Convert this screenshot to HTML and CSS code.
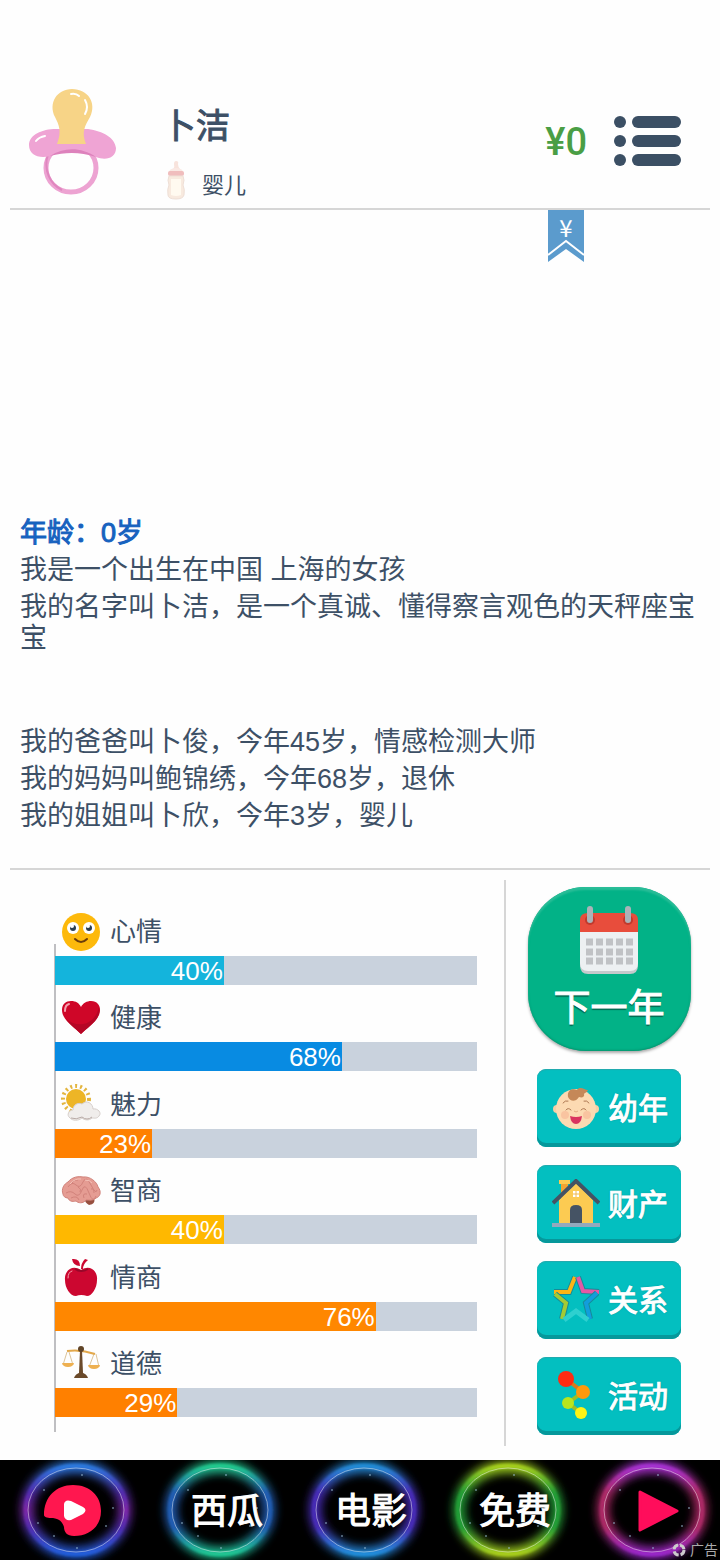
FILE: index.html
```html
<!DOCTYPE html>
<html lang="zh-CN">
<head>
  <meta charset="UTF-8">
  <meta name="viewport" content="width=device-width, initial-scale=1.0">
  <title>卜洁 - 婴儿</title>
  <link rel="stylesheet" href="styles.css">
</head>
<body>
  <header class="header">
    <svg class="avatar" viewBox="0 0 88 108">
      <ellipse cx="43" cy="80" rx="25" ry="24" fill="none" stroke="#eda3d2" stroke-width="5"/>
      <path d="M20 66C15 82 22 96 34 102" fill="none" stroke="#e087bf" stroke-width="2"/>
      <path d="M1 57C1 47 14 41 28 41L60 41C75 43 87 50 88 60C88 70 78 73 68 69C50 61 36 61 22 68C11 71 1 67 1 57Z" fill="#efa4d4"/>
      <path d="M22 68C36 59 53 59 68 69C52 64 38 64 22 68Z" fill="#dd82bc"/>
      <path d="M8 53Q11 49 17 48" fill="none" stroke="#fff" stroke-width="2" stroke-linecap="round"/>
      <path d="M29 56C34 43 31 37 27 29C20 15 29 1 44 1C60 1 69 15 62 29C57 38 53 44 58 56Z" fill="#f7d487"/>
      <path d="M43 6Q48 5 51 8M57 12Q61 19 57 26" fill="none" stroke="#fff" stroke-width="2" stroke-linecap="round"/>
    </svg>
    <div class="person">
      <h1>卜洁</h1>
      <div class="stage">
        <svg width="24" height="40" viewBox="0 0 24 40">
          <path d="M9 9Q11 7 10 4Q10 1 12 1Q15 1 14 4Q14 7 16 9Z" fill="#f8e3dc"/>
          <path d="M4 14Q5 8 12 8Q19 8 20 14Z" fill="#fae9e4"/>
          <rect x="4" y="11" width="16" height="5" rx="2" fill="#f0bdbd"/>
          <path d="M5 16H19Q21 20 19 25Q21 29 20 35Q19 39 12 39Q4 39 4 35Q3 29 5 25Q3 20 5 16Z" fill="#f8eadf" stroke="#eedfd6"/>
          <path d="M7 19H17V35Q12 37 7 35Z" fill="#fffaf0"/>
        </svg>
        <span>婴儿</span>
      </div>
    </div>
    <div class="money">¥0</div>
    <button class="menu" aria-label="菜单">
      <svg width="68" height="52" viewBox="0 0 68 52" fill="#3b4f64">
        <circle cx="6" cy="7" r="6"/><rect x="18" y="1" width="49" height="12" rx="6"/>
        <circle cx="6" cy="26" r="6"/><rect x="18" y="20" width="49" height="12" rx="6"/>
        <circle cx="6" cy="45" r="6"/><rect x="18" y="39" width="49" height="12" rx="6"/>
      </svg>
    </button>
  </header>

  <main class="log">
    <button class="ribbon" aria-label="财富">
      <svg width="36" height="52" viewBox="0 0 36 52">
        <path d="M0 0H36V52L18 39L0 52Z" fill="#5b9bcd"/>
        <path d="M0 45L18 31L36 45" fill="none" stroke="#fff" stroke-width="2"/>
        <text x="18" y="27" text-anchor="middle" class="ribbon-text">¥</text>
      </svg>
    </button>
    <div class="story">
      <h2>年龄：0岁</h2>
      <p>我是一个出生在中国 上海的女孩</p>
      <p>我的名字叫卜洁，是一个真诚、懂得察言观色的天秤座宝宝</p>
      <div class="family">
        <p>我的爸爸叫卜俊，今年45岁，情感检测大师</p>
        <p>我的妈妈叫鲍锦绣，今年68岁，退休</p>
        <p>我的姐姐叫卜欣，今年3岁，婴儿</p>
      </div>
    </div>
  </main>

  <section class="panel">
    <ul class="stats">
      <li>
        <div class="stat-name">
          <svg viewBox="0 0 40 40">
            <circle cx="20" cy="21" r="19" fill="#fdb90b"/>
            <circle cx="12" cy="17" r="6" fill="#fff"/><circle cx="28" cy="17" r="6" fill="#fff"/>
            <circle cx="12" cy="17" r="3" fill="#2c3e50"/><circle cx="28" cy="17" r="3" fill="#2c3e50"/>
            <circle cx="11" cy="15" r="2" fill="#fff"/><circle cx="27" cy="15" r="2" fill="#fff"/>
            <path d="M14 28Q20 34 26 28" fill="none" stroke="#6b3d0c" stroke-width="2" stroke-linecap="round"/>
          </svg>
          <span>心情</span>
        </div>
        <div class="bar"><div class="fill cyan" style="width:40%">40%</div></div>
      </li>
      <li>
        <div class="stat-name">
          <svg viewBox="0 0 40 40">
            <path d="M20 37C13 30 1 23 1 13C1 7 5 4 10 4C15 4 18 6 20 10C22 6 26 4 30 4C36 4 39 8 39 13C39 23 27 30 20 37Z" fill="#cf0628"/>
            <path d="M38 10C41 22 27 30 20 37C14 31 9 28 5 22C17 32 34 28 38 10Z" fill="#b50625"/>
            <path d="M4 14Q4 8 8 7" fill="none" stroke="#f5a0ae" stroke-width="2" stroke-linecap="round"/>
          </svg>
          <span>健康</span>
        </div>
        <div class="bar"><div class="fill blue" style="width:68%">68%</div></div>
      </li>
      <li>
        <div class="stat-name">
          <svg viewBox="0 0 40 40">
            <circle cx="15" cy="15" r="13" fill="none" stroke="#e3b53e" stroke-width="4" stroke-dasharray="2 3"/>
            <circle cx="15" cy="15" r="10" fill="#edb526"/>
            <path d="M9 34C5 31 8 26 12 26C12 21 17 18 21 20C26 15 32 20 32 25C37 24 41 29 38 32C36 35 33 34 31 34C28 37 23 36 21 34C17 37 12 37 9 34Z" fill="#f0edeb" stroke="#d6cfcb"/>
            <path d="M10 34Q15 36 21 33Q26 37 31 33" fill="none" stroke="#b8aaa6" stroke-width="1"/>
          </svg>
          <span>魅力</span>
        </div>
        <div class="bar"><div class="fill orange" style="width:23%">23%</div></div>
      </li>
      <li>
        <div class="stat-name">
          <svg viewBox="0 0 40 40">
            <path d="M23 28H33Q35 34 28 35Q24 33 23 28Z" fill="#97503f"/>
            <path d="M2 24C0 19 3 14 7 12C11 7 17 6 22 7C29 6 36 12 37 17C41 22 39 27 35 28C32 31 28 30 25 30C22 34 17 33 15 31C11 32 8 31 7 28C4 28 2 26 2 24Z" fill="#e59c93" stroke="#d0827a"/>
            <path d="M7 17Q11 11 15 15T22 12T30 15T36 20M5 23Q10 20 14 24T21 20T28 23T35 26M11 13Q13 9 17 10M10 28Q16 25 18 30M23 28Q21 23 26 24M17 17Q21 19 19 22M30 19Q33 18 33 23" fill="none" stroke="#d2827b" stroke-width="1"/>
            <path d="M9 14Q14 8 20 9M24 10Q29 10 31 13" fill="none" stroke="#f4c2b9" stroke-width="1"/>
          </svg>
          <span>智商</span>
        </div>
        <div class="bar"><div class="fill yellow" style="width:40%">40%</div></div>
      </li>
      <li>
        <div class="stat-name">
          <svg viewBox="0 0 40 40">
            <path d="M20 13C29 7 37 14 36 23C36 31 31 39 26 39Q20 37 15 39C9 39 4 31 4 23C3 14 11 7 20 13Z" fill="#cc0730"/>
            <path d="M20 12Q20 6 24 2L27 3Q22 7 22 12ZM19 9Q12 9 11 2Q19 1 19 9Z" fill="#cc0730"/>
            <path d="M14 12Q20 16 27 12" fill="none" stroke="#98082a" stroke-width="2"/>
            <path d="M7 21Q7 15 11 14" fill="none" stroke="#f5a0ae" stroke-width="1" stroke-linecap="round"/>
          </svg>
          <span>情商</span>
        </div>
        <div class="bar"><div class="fill amber" style="width:76%">76%</div></div>
      </li>
      <li>
        <div class="stat-name">
          <svg viewBox="0 0 40 40">
            <path d="M6 9L2 22M8 9L12 22M33 11L28 24M35 11L38 24" stroke="#dcc49a" fill="none"/>
            <path d="M6 8Q20 6 34 11" stroke="#e3a84a" stroke-width="2" fill="none"/>
            <path d="M1 20H13Q12 24 7 24Q2 24 1 20ZM27 22H39Q38 26 33 26Q28 26 27 22Z" fill="#eeb050"/>
            <path d="M19 7H21L22 30H18Z" fill="#6b4a2a"/><circle cx="20" cy="6" r="3" fill="#604427"/>
            <path d="M13 35Q14 31 20 29Q26 31 27 35Z" fill="#6b4a2a"/>
          </svg>
          <span>道德</span>
        </div>
        <div class="bar"><div class="fill orange" style="width:29%">29%</div></div>
      </li>
    </ul>

    <nav class="actions">
      <button class="next-year">
        <svg width="60" height="70" viewBox="0 0 60 70">
          <path d="M1 24V60Q1 69 9 69H51Q59 69 59 60V24Z" fill="#c5c9cc"/>
          <path d="M1 24V58Q1 66 9 66H51Q59 66 59 58V24Z" fill="#edf0f2"/>
          <path d="M1 27V15Q1 8 9 8H51Q59 8 59 15V27Z" fill="#e84d3c"/>
          <circle cx="11" cy="15" r="5" fill="#c13a2d"/><circle cx="49" cy="15" r="5" fill="#c13a2d"/>
          <rect x="8" y="1" width="6" height="17" rx="3" fill="#abb3b8"/><rect x="46" y="1" width="6" height="17" rx="3" fill="#abb3b8"/>
          <g stroke="#c0c2c5" stroke-width="7" stroke-dasharray="7 3"><path d="M7 37H54"/><path d="M7 47H54"/><path d="M7 56H54"/></g>
        </svg>
        <span>下一年</span>
      </button>
      <button class="action">
        <svg viewBox="0 0 48 48">
          <circle cx="5" cy="26" r="4" fill="#f8cfa5"/><circle cx="43" cy="26" r="4" fill="#f8cfa5"/>
          <ellipse cx="24" cy="26" rx="20" ry="20" fill="#fcdab2"/>
          <path d="M16 14C15 7 20 5 25 7C28 2 34 8 36 7C35 10 32 10 32 11C33 14 30 15 27 14C23 20 18 18 16 14Z" fill="#c58858"/>
          <path d="M11 20Q13 17 16 18M32 18Q35 17 37 20M14 27Q16 24 19 27M29 27Q32 24 34 27" fill="none" stroke="#ad7852" stroke-width="1" stroke-linecap="round"/>
          <circle cx="13" cy="32" r="4" fill="#f9c4a0"/><circle cx="35" cy="32" r="4" fill="#f9c4a0"/>
          <path d="M18 33Q24 35 30 33Q29 41 24 41Q19 41 18 33Z" fill="#d9335f"/>
          <path d="M22 28Q24 30 26 28" fill="none" stroke="#e6ab82" stroke-width="1"/>
        </svg>
        <span>幼年</span>
      </button>
      <button class="action">
        <svg viewBox="0 0 48 48">
          <path d="M9 3H16V14L9 20Z" fill="#f3a333"/><rect x="7" y="1" width="11" height="4" fill="#fcca52"/>
          <path d="M7 21L24 4L41 21V44H7Z" fill="#fccb52"/>
          <path d="M1 24L24 2L47 24" fill="none" stroke="#455364" stroke-width="4"/>
          <rect x="0" y="44" width="48" height="4" fill="#94a9bd"/>
          <path d="M18 44V31Q18 26 24 26Q30 26 30 31V44Z" fill="#455364"/>
          <path d="M21 12H27V18H21Z" fill="#fff"/><path d="M24 12V18M21 15H27" stroke="#eeb952"/>
        </svg>
        <span>财产</span>
      </button>
      <button class="action">
        <svg viewBox="0 0 48 48" fill="none" stroke-width="4">
          <path d="M2 17L17 17L23 2" stroke="#178b98" stroke-width="6"/><path d="M2 17L17 17L23 2" stroke="#fdb515"/>
          <path d="M26 2L31 16L47 17" stroke="#178b98" stroke-width="6"/><path d="M26 2L31 16L47 17" stroke="#e359a5"/>
          <path d="M45 18L34 28L38 44" stroke="#178b98" stroke-width="6"/><path d="M45 18L34 28L38 44" stroke="#129edc"/>
          <path d="M3 19L14 28L10 44" stroke="#178b98" stroke-width="6"/><path d="M3 19L14 28L10 44" stroke="#a3cb35"/>
          <path d="M12 45L24 36L36 45" stroke="#2ed0cf" stroke-width="5"/>
        </svg>
        <span>关系</span>
      </button>
      <button class="action">
        <svg viewBox="0 0 48 48">
          <path d="M14 8L31 21" stroke="#d8791d" stroke-width="4"/>
          <path d="M31 21L16 32L29 42" fill="none" stroke="#9dbd26" stroke-width="4"/>
          <circle cx="14" cy="8" r="8" fill="#ff2b12"/><circle cx="31" cy="21" r="7" fill="#ff990b"/>
          <circle cx="16" cy="32" r="6" fill="#b9e51c"/><circle cx="29" cy="42" r="6" fill="#fff314"/>
        </svg>
        <span>活动</span>
      </button>
    </nav>
  </section>

  <footer class="ad">
    <svg width="0" height="0" class="defs">
      <defs>
        <filter id="glow" x="-20%" y="-20%" width="140%" height="140%"><feGaussianBlur stdDeviation="4"/></filter>
        <filter id="soft" x="-20%" y="-20%" width="140%" height="140%"><feGaussianBlur stdDeviation="1"/></filter>
        <linearGradient id="g1" x2="0" y2="1"><stop stop-color="#2f86f5"/><stop offset=".3" stop-color="#5a2fc0"/><stop offset=".5" stop-color="#8a2bb8"/><stop offset=".7" stop-color="#5a2fc0"/><stop offset="1" stop-color="#2468f0"/></linearGradient>
        <linearGradient id="g2" x2="0" y2="1"><stop stop-color="#25e09b"/><stop offset=".3" stop-color="#2466c4"/><stop offset=".7" stop-color="#2466c4"/><stop offset="1" stop-color="#21dca0"/></linearGradient>
        <linearGradient id="g3" x2="0" y2="1"><stop stop-color="#249cec"/><stop offset=".3" stop-color="#4e2fc8"/><stop offset=".7" stop-color="#4e2fc8"/><stop offset="1" stop-color="#239df0"/></linearGradient>
        <linearGradient id="g4" x2="0" y2="1"><stop stop-color="#b8e51f"/><stop offset=".3" stop-color="#26ad3b"/><stop offset=".7" stop-color="#26ad3b"/><stop offset="1" stop-color="#bce41e"/></linearGradient>
        <linearGradient id="g5" x2="0" y2="1"><stop stop-color="#b536e8"/><stop offset=".3" stop-color="#bd2d70"/><stop offset=".7" stop-color="#bd2d70"/><stop offset="1" stop-color="#a82bdf"/></linearGradient>
        <g id="ring">
          <ellipse cx="76" cy="50" rx="49" ry="43" stroke-width="13" stroke-opacity=".8" filter="url(#glow)"/>
          <ellipse cx="76" cy="50" rx="50" ry="44" stroke-width="5" stroke-opacity=".7" filter="url(#soft)"/>
          <ellipse cx="76" cy="50" rx="48" ry="42" stroke="#fff" stroke-opacity=".45" stroke-width="1"/>
        </g>
        <g id="stars" fill="#9fc4dc" fill-opacity=".6">
          <circle cx="44" cy="30" r="1"/><circle cx="82" cy="15" r="1"/><circle cx="38" cy="63" r="1"/><circle cx="54" cy="76" r="1"/>
          <circle cx="106" cy="66" r="1"/><circle cx="113" cy="48" r="1"/><circle cx="77" cy="88" r="1"/>
        </g>
      </defs>
    </svg>
    <a href="#" class="orb" aria-label="播放">
      <svg viewBox="0 0 144 100" fill="none">
        <use href="#ring" stroke="url(#g1)"/><use href="#stars"/>
        <path d="M44 55C44 37 56 25 73 25C90 25 101 36 101 51C101 66 90 76 74 76C67 76 64 72 64 67C62 60 57 58 51 58C47 58 44 57 44 55Z" fill="#ff174f"/>
        <path d="M64 44Q65 39 71 41L83 47Q88 50 83 54L71 60Q65 61 64 56Z" fill="#fff"/>
      </svg>
    </a>
    <a href="#" class="orb">
      <svg viewBox="0 0 144 100" fill="none"><use href="#ring" stroke="url(#g2)"/><use href="#stars"/></svg>
      <span>西瓜</span>
    </a>
    <a href="#" class="orb">
      <svg viewBox="0 0 144 100" fill="none"><use href="#ring" stroke="url(#g3)"/><use href="#stars"/></svg>
      <span>电影</span>
    </a>
    <a href="#" class="orb">
      <svg viewBox="0 0 144 100" fill="none"><use href="#ring" stroke="url(#g4)"/><use href="#stars"/></svg>
      <span>免费</span>
    </a>
    <a href="#" class="orb" aria-label="打开">
      <svg viewBox="0 0 144 100" fill="none">
        <use href="#ring" stroke="url(#g5)"/><use href="#stars"/>
        <path d="M64 32L101 51L64 70Z" fill="#ff0d5b" stroke="#ff0d5b" stroke-width="3" stroke-linejoin="round"/>
      </svg>
    </a>
    <div class="ad-tag">
      <svg width="14" height="14" viewBox="0 0 14 14"><circle cx="7" cy="7" r="5" fill="none" stroke="#ccc" stroke-width="3" stroke-dasharray="6 2"/></svg>
      广告
    </div>
  </footer>
</body>
</html>
```
FILE: styles.css
```css
* {
  box-sizing: border-box;
}
body {
  margin: 0;
  min-height: 100vh;
  display: flex;
  flex-direction: column;
  background: #fefefe;
  color: #3d5066;
  font-family: "Liberation Sans", "Noto Sans CJK SC", sans-serif;
}
h1, h2, p, ul {
  margin: 0;
  padding: 0;
}
button {
  font-family: inherit;
  border: none;
  background: none;
  padding: 0;
  cursor: pointer;
}
svg {
  display: block;
}

/* header */
.header {
  display: flex;
  align-items: flex-start;
  margin: 0 10px;
  padding: 88px 28px 0 18px;
  height: 210px;
  border-bottom: 2px solid #d6d6d6;
}
.avatar {
  width: 88px;
  height: 108px;
}
.person {
  flex: 1;
  padding-left: 46px;
}
h1 {
  padding-top: 4px;
  font-size: 34px;
  line-height: 68px;
  font-weight: 400;
  -webkit-text-stroke: 1px;
}
.stage {
  display: flex;
  align-items: flex-end;
  gap: 14px;
  margin-left: 2px;
  font-size: 22px;
  line-height: 28px;
}
.money {
  font-family: Roboto, sans-serif;
  font-size: 38px;
  font-weight: 500;
  line-height: 108px;
  color: #4a9e45;
}
.menu {
  margin: 27px 0 0 27px;
}

/* life log */
.log {
  flex: 1;
  display: flex;
  flex-direction: column;
}
.ribbon {
  align-self: flex-end;
  margin-right: 136px;
}
.ribbon svg {
  overflow: visible;
}
.ribbon-text {
  font-family: "Noto Sans CJK SC", sans-serif;
  font-size: 24px;
  fill: #fff;
}
.story {
  margin-top: auto;
  padding: 30px 20px 36px;
  font-size: 27px;
  line-height: 31px;
}
h2 {
  font-size: 27px;
  font-weight: 400;
  -webkit-text-stroke: 1px;
  color: #1762bf;
}
.story p {
  margin-top: 6px;
}
.family {
  margin-top: 73px;
}

/* stats + actions */
.panel {
  display: grid;
  grid-template-columns: 1fr 206px;
  margin: 0 10px;
  padding: 10px 0 14px;
  border-top: 2px solid #d6d6d6;
}
.stats {
  list-style: none;
  display: flex;
  flex-direction: column;
  justify-content: space-between;
  margin: 31px 27px 14px 44px;
  padding: 0 0 15px 1px;
  background: linear-gradient(#bfbfc2, #bfbfc2) no-repeat left bottom / 2px calc(100% - 33px);
}
.stat-name {
  display: flex;
  align-items: center;
  gap: 9px;
  height: 40px;
  margin: 0 0 5px 6px;
  font-size: 26px;
  line-height: 42px;
}
.stat-name svg {
  width: 40px;
  height: 40px;
}
.stat-name span {
  align-self: flex-start;
}
.bar {
  background: #c9d2dd;
  height: 29px;
}
.fill {
  height: 100%;
  padding-right: 1px;
  color: #fff;
  font-size: 26px;
  line-height: 31px;
  text-align: right;
}
.cyan { background: #14b4dc; }
.blue { background: #088be2; }
.orange { background: #ff8000; }
.yellow { background: #ffb800; }
.amber { background: #ff8700; }

.actions {
  display: flex;
  flex-direction: column;
  align-items: center;
  gap: 18px;
  padding: 7px 0 11px 2px;
  border-left: 2px solid #d6d6d6;
}
.next-year {
  display: flex;
  flex-direction: column;
  align-items: center;
  width: 163px;
  height: 164px;
  padding-top: 18px;
  border-radius: 58px;
  background: #02b287;
  box-shadow: inset 0 3px 2px #2abd98, inset 0 -1px 2px #05956f, 0 2px 3px #aaa;
  color: #fff;
  font-size: 37px;
  line-height: 68px;
  text-shadow: 0 2px 1px #04664f;
  -webkit-text-stroke: 1px;
}
.action {
  display: flex;
  align-items: center;
  gap: 8px;
  width: 144px;
  height: 78px;
  padding: 0 0 2px 15px;
  border-radius: 9px;
  background: #03bfc0;
  box-shadow: inset 0 1px 1px #25a9ad, inset 0 -4px 0 #06989b;
  color: #fff;
  font-size: 30px;
  line-height: 44px;
  -webkit-text-stroke: 1px;
  text-shadow: 0 0 2px #04787a;
}
.action svg {
  width: 48px;
  height: 48px;
}
.action span {
  padding-top: 4px;
}

/* ad banner */
.ad {
  position: relative;
  display: grid;
  grid-template-columns: repeat(5, 1fr);
  height: 100px;
  background: #000;
  overflow: hidden;
}
.defs {
  position: absolute;
}
.orb {
  display: grid;
  place-items: center;
  color: #fff;
  text-decoration: none;
}
.orb > * {
  grid-area: 1 / 1;
}
.orb svg {
  height: 100px;
}
.orb span {
  padding: 4px 0 0 22px;
  font-size: 36px;
  line-height: 36px;
  -webkit-text-stroke: 1px;
}
.ad-tag {
  position: absolute;
  right: 2px;
  bottom: 0;
  display: flex;
  align-items: center;
  gap: 4px;
  font-size: 14px;
  line-height: 20px;
  color: #aaa;
}
```
